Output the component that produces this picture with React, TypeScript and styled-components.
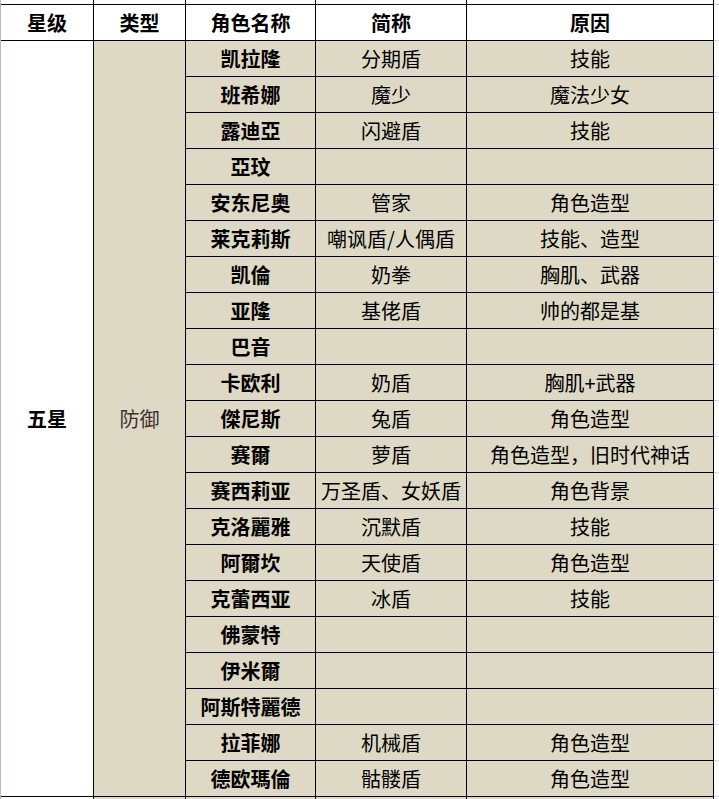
import React from 'react';
import styled, { createGlobalStyle } from 'styled-components';

const GlobalStyle = createGlobalStyle`
  html, body {
    margin: 0;
    padding: 0;
    background: #ffffff;
  }
  body {
    font-family: "Noto Sans CJK SC", "Noto Sans", sans-serif;
  }
`;

const TAN = '#ddd9c4';

const Sheet = styled.div`
  display: grid;
  grid-template-columns: 93px 92px 130px 151px 247px 5px;
  grid-template-rows: 5px 36px repeat(21, 36px) 4px;
  width: 718px;
  height: 799px;
  overflow: hidden;
  border-left: 1px solid #a9bcd5;
  background: #ffffff;
`;

const Cell = styled.div<{ $bg?: string; $bold?: boolean; $color?: string; $span?: number }>`
  box-sizing: border-box;
  display: flex;
  align-items: center;
  justify-content: center;
  border-right: 1px solid #000;
  border-bottom: 1px solid #000;
  background: ${({ $bg }) => $bg || '#ffffff'};
  color: ${({ $color }) => $color || '#000'};
  font-size: 20px;
  font-weight: ${({ $bold }) => ($bold ? 700 : 400)};
  line-height: 1;
  white-space: nowrap;
  overflow: hidden;
  ${({ $span }) => ($span ? `grid-row: span ${$span};` : '')}
`;

const Stub = styled.div`
  box-sizing: border-box;
  border-bottom: 1px solid #d0d7e5;
`;

interface IRow {
  name: string;
  abbr: string;
  reason: string;
}

const rows: IRow[] = [
  { name: '凯拉隆', abbr: '分期盾', reason: '技能' },
  { name: '班希娜', abbr: '魔少', reason: '魔法少女' },
  { name: '露迪亞', abbr: '闪避盾', reason: '技能' },
  { name: '亞玟', abbr: '', reason: '' },
  { name: '安东尼奥', abbr: '管家', reason: '角色造型' },
  { name: '莱克莉斯', abbr: '嘲讽盾/人偶盾', reason: '技能、造型' },
  { name: '凯倫', abbr: '奶拳', reason: '胸肌、武器' },
  { name: '亚隆', abbr: '基佬盾', reason: '帅的都是基' },
  { name: '巴音', abbr: '', reason: '' },
  { name: '卡欧利', abbr: '奶盾', reason: '胸肌+武器' },
  { name: '傑尼斯', abbr: '兔盾', reason: '角色造型' },
  { name: '赛爾', abbr: '萝盾', reason: '角色造型，旧时代神话' },
  { name: '赛西莉亚', abbr: '万圣盾、女妖盾', reason: '角色背景' },
  { name: '克洛麗雅', abbr: '沉默盾', reason: '技能' },
  { name: '阿爾坎', abbr: '天使盾', reason: '角色造型' },
  { name: '克蕾西亚', abbr: '冰盾', reason: '技能' },
  { name: '佛蒙特', abbr: '', reason: '' },
  { name: '伊米爾', abbr: '', reason: '' },
  { name: '阿斯特麗德', abbr: '', reason: '' },
  { name: '拉菲娜', abbr: '机械盾', reason: '角色造型' },
  { name: '德欧瑪倫', abbr: '骷髅盾', reason: '角色造型' },
];

const headers = ['星级', '类型', '角色名称', '简称', '原因'];

export default function App() {
  return (
    <>
      <GlobalStyle />
      <Sheet>
        {headers.map((h) => (
          <Cell key={'top-' + h} />
        ))}
        <Stub />

        {headers.map((h) => (
          <Cell key={h} $bold>
            {h}
          </Cell>
        ))}
        <Stub />

        <Cell $bold $span={rows.length}>
          五星
        </Cell>
        <Cell $bg={TAN} $color="#3d3030" $span={rows.length}>
          防御
        </Cell>

        {rows.map((r) => (
          <React.Fragment key={r.name}>
            <Cell $bg={TAN} $bold>
              {r.name}
            </Cell>
            <Cell $bg={TAN}>{r.abbr}</Cell>
            <Cell $bg={TAN}>{r.reason}</Cell>
            <Stub />
          </React.Fragment>
        ))}

        <Cell />
        <Cell $bg={TAN} />
        <Cell $bg={TAN} />
        <Cell $bg={TAN} />
        <Cell $bg={TAN} />
        <Stub />
      </Sheet>
    </>
  );
}
